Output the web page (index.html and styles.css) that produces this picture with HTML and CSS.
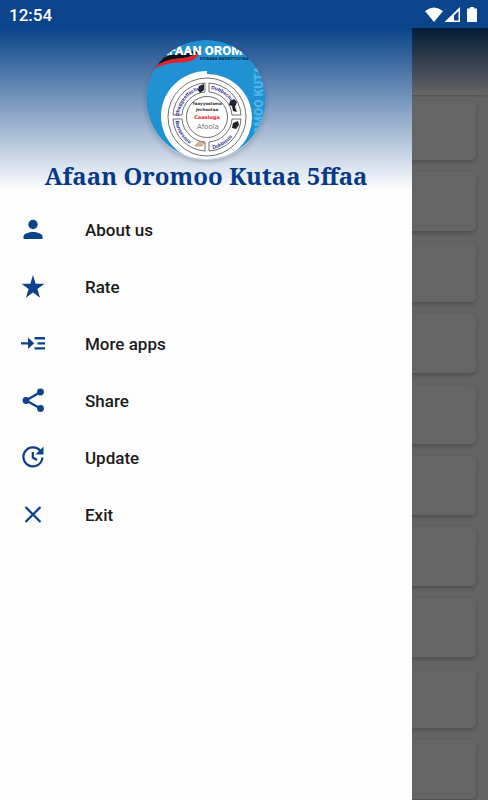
FILE: index.html
```html
<!DOCTYPE html>
<html lang="om">
<head>
  <meta charset="UTF-8" />
  <meta name="viewport" content="width=device-width, initial-scale=1" />
  <title>Afaan Oromoo Kutaa 5ffaa</title>
  <link rel="stylesheet" href="styles.css">
</head>
<body>

  <div class="status">
    <span>12:54</span>
    <svg class="status-icons" viewBox="0 0 54 16" aria-hidden="true">
      <path fill="#fff" d="M0 4Q9 -3 18 4L9 15Z"/>
      <path fill="#fff" fill-rule="evenodd" d="M35 0V15H19.500ZM33.500 4V13.500H29V8.500Z"/>
      <path fill="#fff" d="M45 0h4v1.500h3V15H42V1.500h3Z"/>
    </svg>
  </div>

  <main class="screen">
    <div class="page">
      <div class="appbar"></div>
      <div class="cards">
        <div class="card"></div>
        <div class="card"></div>
        <div class="card"></div>
        <div class="card"></div>
        <div class="card"></div>
        <div class="card"></div>
        <div class="card"></div>
        <div class="card"></div>
        <div class="card"></div>
        <div class="card"></div>
      </div>
    </div>

    <div class="scrim"></div>

    <nav class="drawer">
      <header class="header">
        <svg class="logo" viewBox="0 0 120 120" aria-hidden="true">
          <defs>
            <clipPath id="round"><circle cx="60" cy="59.500" r="59.500"/></clipPath>
            <path id="arc1" d="M33 76A28 28 0 0 1 62 49"/>
            <path id="arc2" d="M65 49A28 28 0 0 1 89 76"/>
            <path id="arc3" d="M29.500 81A32 32 0 0 0 58 109"/>
            <path id="arc4" d="M67 109A32 32 0 0 0 92 82"/>
          </defs>
          <g clip-path="url(#round)">
            <rect width="120" height="120" fill="#2092d3"/>
            <path fill="#111" d="M8 24Q18 15 31 14Q42 14 50 9H56Q50 17 34 18.500Q20 19 8 28Z"/>
            <path fill="#e5202b" d="M7 28Q18 19 33 18.500Q47 18 56 11Q49 23 34 22.500Q20 22 7 30Z"/>
            <text class="logo-title" x="14" y="15">AFAAN OROMOO</text>
            <text class="logo-sub" x="54" y="20">KITAABA BARATTOOTAA</text>
            <text class="logo-side" transform="translate(117 111) rotate(-90)">OROMOO KUTAA</text>
            <path fill="#fff" d="M61 31V34A45 43.500 0 0 1 61 121A46 45 0 0 1 61 31Z"/>
            <g fill="none" stroke="#333" stroke-width=".7">
              <circle cx="61" cy="77" r="39"/>
              <circle cx="61" cy="77" r="20.500"/>
              <path d="M59 43A34 34 0 0 0 27 75H36A25 25 0 0 1 59 52Z"/>
              <path d="M63 43A34 34 0 0 1 95 75H86A25 25 0 0 0 63 52Z"/>
              <path d="M59 111A34 34 0 0 1 27 79H36A25 25 0 0 0 59 102Z"/>
              <path d="M63 111A34 34 0 0 0 95 79H86A25 25 0 0 1 63 102Z"/>
            </g>
            <path fill="#222" d="M53 46l5-2v6l-4 3-2-3zM84 61l4-2 3 3-2 5 2 5-4-1-1-5-3-1zM87 83l5-2 1 4-3 4-4-1z"/>
            <path fill="#e6b58b" stroke="#8a6247" stroke-width=".5" d="M49 106l5-5 4 2-2 3z"/>
            <g class="logo-arc">
              <text><textPath href="#arc1">Dhaggeeffachuu</textPath></text>
              <text><textPath href="#arc2">Dubbachuu</textPath></text>
              <text><textPath href="#arc3">Barreessuu</textPath></text>
              <text><textPath href="#arc4">Dubbisuu</textPath></text>
            </g>
            <g text-anchor="middle">
              <text class="logo-core" x="61" y="65">Yaayyoolama</text>
              <text class="logo-core" x="61" y="71">Jechootaa</text>
              <text class="logo-core red" x="61" y="79">Caasluga</text>
              <text class="logo-core gray" x="62" y="89">Afoola</text>
            </g>
          </g>
        </svg>
        <h1 class="title">Afaan Oromoo Kutaa 5ffaa</h1>
      </header>

      <ul class="menu">
        <li><a class="item" href="#about">
          <svg class="icon" viewBox="0 0 28 28" aria-hidden="true"><circle cx="14" cy="8.500" r="4.700"/><path d="M4.500 23v-2.500C4.500 17.500 10 16 14 16s9.500 1.500 9.500 4.500V23Z"/></svg>
          <span>About us</span></a></li>
        <li><a class="item" href="#rate">
          <svg class="icon" viewBox="0 0 28 28" aria-hidden="true"><path d="M14 2L16.700 10.800H25.500L18.400 16L21.100 24.700L14 19.400L6.900 24.700L9.600 16L2.500 10.800H11.300Z"/></svg>
          <span>Rate</span></a></li>
        <li><a class="item" href="#more">
          <svg class="icon" viewBox="0 0 28 28" aria-hidden="true"><path d="M2 12.300H9V7.500L15.200 13.300L9 19V14.500H2ZM15.500 7H26V9.400H15.500ZM18.500 12.200H26V14.600H18.500ZM15.500 17.200H26V19.600H15.500Z"/></svg>
          <span>More apps</span></a></li>
        <li><a class="item" href="#share">
          <svg class="icon" viewBox="0 0 28 28" aria-hidden="true"><path class="line" d="M21.500 5L7 13.500L21.500 21.500"/><circle cx="21.500" cy="5" r="3.400"/><circle cx="7" cy="13.500" r="3.400"/><circle cx="21.500" cy="21.500" r="3.400"/></svg>
          <span>Share</span></a></li>
        <li><a class="item" href="#update">
          <svg class="icon" viewBox="0 0 28 28" aria-hidden="true"><path class="line" d="M21.500 7.200A9.500 9.500 0 1 0 23.400 13.500M13.800 8V13.500L18 16"/><path d="M24.500 2.500V10.500H16.500Z"/></svg>
          <span>Update</span></a></li>
        <li><a class="item" href="#exit">
          <svg class="icon" viewBox="0 0 28 28" aria-hidden="true"><path class="line" d="M6.500 6L21.500 21M21.500 6L6.500 21"/></svg>
          <span>Exit</span></a></li>
      </ul>
    </nav>
  </main>

</body>
</html>
```

FILE: styles.css
```css
* {
  box-sizing: border-box;
}
body {
  margin: 0;
  height: 100vh;
  display: flex;
  flex-direction: column;
  overflow: hidden;
  font-family: Roboto, sans-serif;
  background: #fdfdfd;
}
.status {
  flex: none;
  display: flex;
  justify-content: space-between;
  align-items: center;
  height: 28px;
  padding: 1px 9px 0;
  background: #0b448a;
  color: #fff;
  font-size: 17px;
  font-weight: 500;
}
.status-icons {
  width: 54px;
  height: 16px;
}
.screen {
  flex: 1;
  position: relative;
  min-height: 0;
}
.page {
  height: 100%;
  overflow: hidden;
  background: #fafafa;
}
.appbar {
  height: 67px;
  background: linear-gradient(#0b448a, #fdfdfd);
  box-shadow: 0 1px 2px rgba(0, 0, 0, 0.2);
}
.cards {
  display: flex;
  flex-direction: column;
  gap: 12px;
  padding: 6px 12px;
}
.card {
  flex: none;
  height: 59px;
  border-radius: 5px;
  background: #fdfdfd;
  box-shadow: 0 2px 5px rgba(0, 0, 0, 0.25);
}
.scrim {
  position: absolute;
  inset: 0;
  background: rgba(0, 0, 0, 0.6);
}

/* drawer */
.drawer {
  position: absolute;
  top: 0;
  bottom: 0;
  left: 0;
  width: calc(100% - 76px);
  background: #fdfdfd;
}
.header {
  display: flex;
  flex-direction: column;
  align-items: center;
  padding-top: 12px;
  height: 162px;
  background: linear-gradient(#0b448a, #fdfdfd);
}
.logo {
  flex: none;
  width: 120px;
  height: 120px;
  border-radius: 50%;
  box-shadow: 0 2px 5px rgba(0, 0, 0, 0.2);
}
.title {
  margin: 0;
  font-family: "Noto Serif", "DejaVu Serif Condensed", "DejaVu Serif", serif;
  font-size: 24px;
  line-height: 32px;
  font-weight: bold;
  white-space: nowrap;
  color: #063a88;
}
.logo-title {
  font: 900 13px Roboto, sans-serif;
  fill: #fff;
}
.logo-sub {
  font: bold 4px "Liberation Sans", sans-serif;
  fill: #123;
}
.logo-side {
  font: 900 12px Roboto, sans-serif;
  fill: #54b4e6;
}
.logo-arc {
  font: bold 5px "Liberation Sans", sans-serif;
  fill: #23238e;
}
.logo-core {
  font: bold 4px "DejaVu Sans", sans-serif;
  fill: #333;
}
.logo-core.red {
  font-size: 5px;
  fill: #e5202b;
}
.logo-core.gray {
  font-size: 7px;
  font-weight: normal;
  fill: #777;
}

.menu {
  list-style: none;
  margin: 0;
  padding: 11px 0 0;
}
.item {
  display: flex;
  align-items: center;
  gap: 38px;
  height: 57px;
  padding: 0 19px;
  color: #1b1b1b;
  font-size: 17px;
  font-weight: 500;
  text-decoration: none;
}
.icon {
  width: 28px;
  height: 28px;
  fill: #0b448a;
}
.icon .line {
  fill: none;
  stroke: #0b3f8c;
  stroke-width: 2.2;
}
```
